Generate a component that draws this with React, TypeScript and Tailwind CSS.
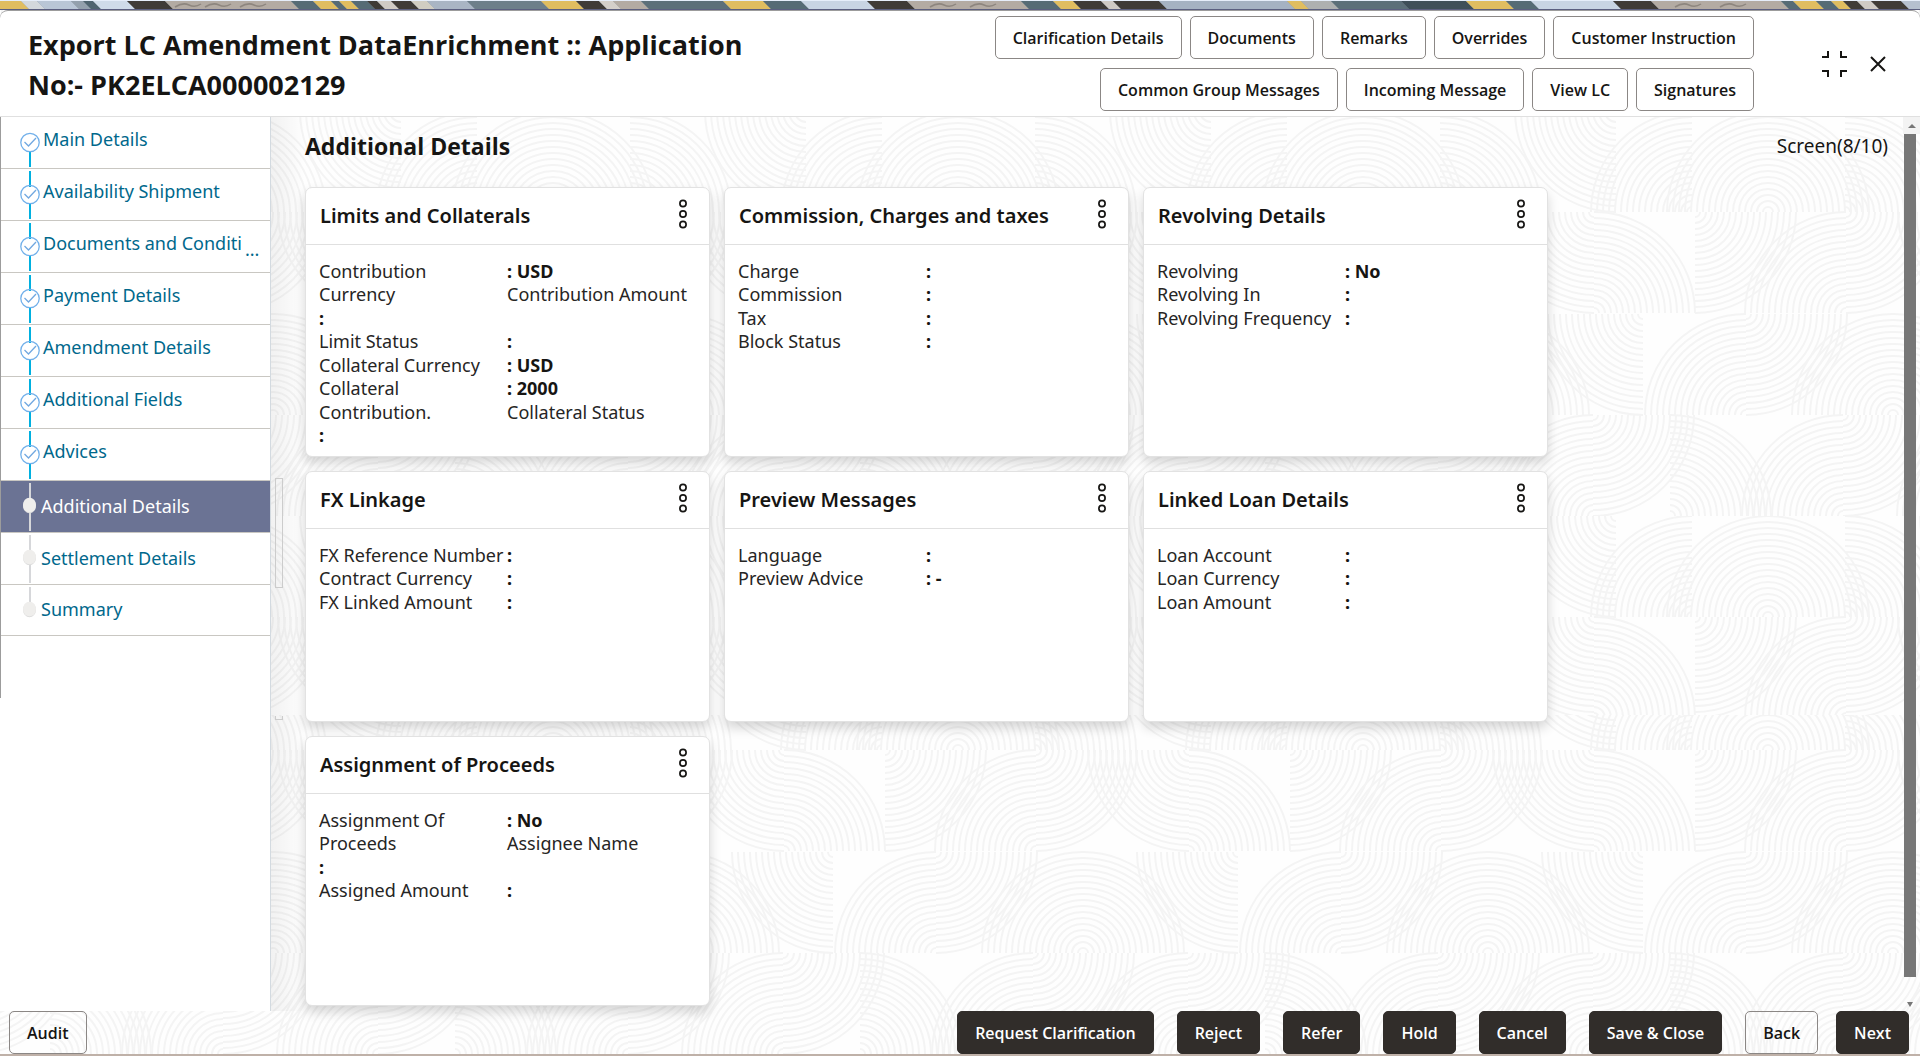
import React from 'react';

type Line = [string, string, boolean?];

const headerActions = [
  'Clarification Details',
  'Documents',
  'Remarks',
  'Overrides',
  'Customer Instruction',
  'Common Group Messages',
  'Incoming Message',
  'View LC',
  'Signatures',
];

const steps: { label: string; state: 'done' | 'active' | 'pending'; cut?: boolean }[] = [
  { label: 'Main Details', state: 'done' },
  { label: 'Availability Shipment', state: 'done' },
  { label: 'Documents and Conditi', state: 'done', cut: true },
  { label: 'Payment Details', state: 'done' },
  { label: 'Amendment Details', state: 'done' },
  { label: 'Additional Fields', state: 'done' },
  { label: 'Advices', state: 'done' },
  { label: 'Additional Details', state: 'active' },
  { label: 'Settlement Details', state: 'pending' },
  { label: 'Summary', state: 'pending' },
];

// Each line: left text, right text, and whether the right text is a label too.
const cards: { title: string; short?: boolean; lines: Line[] }[] = [
  {
    title: 'Limits and Collaterals',
    lines: [
      ['Contribution', ': USD'],
      ['Currency', 'Contribution Amount', true],
      [':', ''],
      ['Limit Status', ':'],
      ['Collateral Currency', ': USD'],
      ['Collateral', ': 2000'],
      ['Contribution.', 'Collateral Status', true],
      [':', ''],
    ],
  },
  {
    title: 'Commission, Charges and taxes',
    lines: [
      ['Charge', ':'],
      ['Commission', ':'],
      ['Tax', ':'],
      ['Block Status', ':'],
    ],
  },
  {
    title: 'Revolving Details',
    lines: [
      ['Revolving', ': No'],
      ['Revolving In', ':'],
      ['Revolving Frequency', ':'],
    ],
  },
  {
    title: 'FX Linkage',
    short: true,
    lines: [
      ['FX Reference Number', ':'],
      ['Contract Currency', ':'],
      ['FX Linked Amount', ':'],
    ],
  },
  {
    title: 'Preview Messages',
    short: true,
    lines: [
      ['Language', ':'],
      ['Preview Advice', ': -'],
    ],
  },
  {
    title: 'Linked Loan Details',
    short: true,
    lines: [
      ['Loan Account', ':'],
      ['Loan Currency', ':'],
      ['Loan Amount', ':'],
    ],
  },
  {
    title: 'Assignment of Proceeds',
    lines: [
      ['Assignment Of', ': No'],
      ['Proceeds', 'Assignee Name', true],
      [':', ''],
      ['Assigned Amount', ':'],
    ],
  },
];

// Slanted banner bands: start, end, colour.
const bands: [number, number, string][] = [
  [-10, 20, '#e0bd60'], [20, 36, '#d3d8dc'], [36, 70, '#b9c6d6'], [70, 82, '#93a0ad'], [82, 92, '#4f6470'],
  [92, 126, '#cfdbe9'], [126, 164, '#3f3b37'], [164, 290, '#b3aba3'], [290, 312, '#566b75'], [312, 330, '#e0bd60'],
  [330, 338, '#566b75'], [338, 350, '#e0bd60'], [350, 366, '#566b75'], [366, 376, '#3f3b37'], [376, 390, '#cfcac5'],
  [390, 410, '#3f3b37'], [410, 426, '#d0cdc2'], [426, 466, '#a9b5c4'], [466, 540, '#6d7f8a'], [540, 575, '#e0bd60'],
  [575, 598, '#3f3b37'], [598, 612, '#d3cfca'], [612, 640, '#b3aba3'], [640, 722, '#5c6f79'], [722, 762, '#e0bd60'],
  [762, 800, '#566b75'], [800, 866, '#c8d4e3'], [866, 906, '#3f3b37'], [906, 1020, '#b3aba3'], [1020, 1052, '#566b75'],
  [1052, 1072, '#e0bd60'], [1072, 1100, '#3f3b37'], [1100, 1112, '#cfcac5'], [1112, 1158, '#3f3b37'],
  [1158, 1286, '#a5b2c2'], [1286, 1300, '#e0bd60'], [1300, 1330, '#aeb0b0'], [1330, 1400, '#5c6f79'],
  [1400, 1465, '#3f4f59'], [1465, 1505, '#e0bd60'], [1505, 1530, '#566b75'], [1530, 1612, '#c8d4e3'],
  [1612, 1650, '#3f3b37'], [1650, 1780, '#b3aba3'], [1780, 1792, '#566b75'], [1792, 1815, '#e0bd60'],
  [1815, 1830, '#566b75'], [1830, 1842, '#e0bd60'], [1842, 1856, '#3f3b37'], [1856, 1870, '#cfcac5'],
  [1870, 1900, '#3f3b37'], [1900, 1940, '#b5c0cf'],
];

function Banner() {
  return (
    <div className="h-2.5 shrink-0 overflow-hidden bg-[#5b5f80]">
      <svg className="block h-[9px] w-full" viewBox="0 0 1920 9" preserveAspectRatio="none" aria-hidden="true">
        <rect width="1920" height="9" fill="#8d99a5" />
        {bands.map(([a, b, c], i) => (
          <polygon key={i} points={`${a},0 ${b},0 ${b + 9},9 ${a + 9},9`} fill={c} />
        ))}
        <path
          d="M175 7q8-5 14-2t12-1M205 7q8-5 14-2t12-1M240 7q8-5 14-2t12-1M930 7q8-5 14-2t12-1M970 7q8-5 14-2t12-1M1675 7q8-5 14-2t12-1M1720 7q8-5 14-2t12-1"
          fill="none"
          stroke="#8d867f"
          strokeWidth="1.5"
        />
        <rect width="1920" height="1" fill="#e6eefa" />
      </svg>
    </div>
  );
}

// Quarter fans of the backdrop tile: centre x, centre y, horizontal and vertical direction.
const fans: [number, number, number, number][] = [
  [401, 0, -1, 1], [72, 101, -1, -1], [148, 101, -1, -1], [148, 101, 1, -1], [225, 101, 1, -1],
  [379, 101, -1, 1], [379, 202, 1, -1], [75, 101, 1, 1], [226, 202, -1, -1], [226, 101, 1, 1],
  [23, 203, -1, 1], [126, 304, -1, -1], [126, 203, 1, 1], [273, 304, -1, -1], [273, 304, 1, -1],
  [378, 405, -1, -1], [378, 304, 1, 1], [50, 405, 1, -1], [223, 405, -1, -1], [223, 304, 1, 1],
];

const rings = Array.from({ length: 17 }, (_, i) => 5 + i * 6);

function fanPath(cx: number, cy: number, dx: number, dy: number) {
  const sweep = dx * dy > 0 ? 1 : 0;
  return rings.map((r) => `M${cx + dx * r} ${cy}A${r} ${r} 0 0 ${sweep} ${cx} ${cy + dy * r}`).join('');
}

function Backdrop() {
  return (
    <svg className="pointer-events-none absolute inset-0 h-full w-full" aria-hidden="true">
      <defs>
        <g id="fans" fill="none" stroke="#f4f4f4" strokeWidth="2">
          {[-405, 0, 405].map((shift) =>
            fans.map(([x, y, dx, dy], i) => <path key={`${shift}-${i}`} d={fanPath(x + shift, y, dx, dy)} />)
          )}
        </g>
        <pattern id="upper" width="405" height="405" patternUnits="userSpaceOnUse" x="0" y="111">
          <use href="#fans" />
        </pattern>
        <pattern id="lower" width="405" height="405" patternUnits="userSpaceOnUse" x="0" y="649">
          <use href="#fans" />
        </pattern>
      </defs>
      <rect width="100%" height="715" fill="url(#upper)" />
      <rect y="715" width="100%" height="100%" fill="url(#lower)" />
    </svg>
  );
}

function StepMark({ state, first, last }: { state: string; first: boolean; last: boolean }) {
  if (state === 'done') {
    return (
      <svg className="h-[51px] w-5 shrink-0" viewBox="0 0 20 51" fill="none" aria-hidden="true">
        {!first && <rect x="9" y="2" width="2" height="16" fill="#00b0e0" />}
        <rect x="9" y="35" width="2" height="15" fill="#00b0e0" />
        <circle cx="10" cy="25.5" r="9.2" stroke="#72b0ea" strokeWidth="1.3" />
        <path d="M4.5 25l4 4 7.5-8" stroke="#72a8e0" strokeWidth="1.3" />
      </svg>
    );
  }
  return (
    <svg className={`w-5 shrink-0 ${last ? 'h-[50px]' : 'h-[51px]'}`} viewBox={last ? '0 0 20 50' : '0 0 20 51'} aria-hidden="true">
      <rect x="9" y="2" width="2" height={last ? 20 : 48} fill="#d6d7da" />
      <ellipse cx="9.5" cy="24.8" rx="6.5" ry="7.5" fill="#dddddd" />
      <ellipse cx="9.5" cy="24" rx="6.5" ry="7.3" fill="#efeeec" />
    </svg>
  );
}

function Sidebar() {
  return (
    <nav aria-label="Steps" className="w-[271px] shrink-0 border-r border-[#d3dae0] bg-white font-['Noto_Sans',sans-serif] text-[18px] leading-6">
      <ul className="min-h-[581px] border-l border-[#9c9c9c]">
        {steps.map((s, i) => (
          <li key={s.label} className={`border-b border-[#c9c7c2] ${s.state === 'active' ? 'bg-[#6b7394] text-white' : 'text-[#00688c]'}`}>
            <a href="#" className={`flex pl-[19px] ${s.state === 'done' ? 'items-start gap-[3px]' : 'items-center gap-px'}`}>
              <StepMark state={s.state} first={i === 0} last={i === steps.length - 1} />
              <span className={`whitespace-nowrap ${s.state === 'done' ? 'pt-2.5' : 'pb-0.5'}`}>{s.label}</span>
              {s.cut && <span className="pt-4">...</span>}
            </a>
          </li>
        ))}
      </ul>
    </nav>
  );
}

function Card({ title, short, lines }: { title: string; short?: boolean; lines: Line[] }) {
  return (
    <section
      className={`w-[405px] rounded-[7px] border border-[#e2e2e2] bg-white shadow-[0_6px_12px_rgba(0,0,0,0.16)] ${short ? 'min-h-[251px]' : 'min-h-[270px]'}`}
    >
      <header className="flex h-[57px] items-center justify-between border-b border-[#e0e0e0] pr-5 pl-[14px]">
        <h2 className="font-['Noto_Sans',sans-serif] text-[20px] leading-7 font-semibold">{title}</h2>
        <button type="button" aria-label={`${title} menu`} className="pb-1">
          <svg className="block h-[30px] w-3" viewBox="0 0 12 30" fill="none" stroke="#161513" strokeWidth="1.7" aria-hidden="true">
            <circle cx="6" cy="4.5" r="3.1" />
            <circle cx="6" cy="15" r="3.1" />
            <circle cx="6" cy="25.5" r="3.1" />
          </svg>
        </button>
      </header>
      <dl className="grid grid-cols-[188px_1fr] pt-[14px] pl-[13px] font-['Noto_Sans',sans-serif] text-[18px] whitespace-nowrap">
        {lines.map(([left, right, plain], i) => {
          const leading = i % 2 ? 'leading-[23px]' : 'leading-6';
          return (
            <React.Fragment key={i}>
              <dt className={`${leading} ${left === ':' ? 'font-bold' : 'text-[#262524]'}`}>{left}</dt>
              <dd className={`${leading} ${plain ? 'text-[#262524]' : 'font-bold'}`}>{right}</dd>
            </React.Fragment>
          );
        })}
      </dl>
    </section>
  );
}

function FooterButton({ label, outline }: { label: string; outline?: boolean }) {
  return (
    <button
      type="button"
      className={`h-[43px] rounded-[5px] border px-[17px] text-[16px] leading-6 font-semibold whitespace-nowrap ${
        outline ? 'border-[#8b8785] text-[#161513]' : 'border-[#312d2a] bg-[#312d2a] text-white'
      }`}
    >
      {label}
    </button>
  );
}

export default function App() {
  return (
    <div className="relative flex min-h-screen flex-col bg-[#fefefe] font-['Open_Sans',sans-serif] text-[#161513]">
      <Backdrop />
      <div className="relative flex flex-1 flex-col">
        <Banner />
        <header className="flex items-start rounded-t-lg border-t border-b border-t-[#9c9c9c] border-b-[#e0e0e0] bg-white pr-[34px] pl-7">
          <h1 className="w-[740px] shrink-0 pt-[14px] text-[27px] leading-10 font-bold">
            Export LC Amendment DataEnrichment :: Application No:- PK2ELCA000002129
          </h1>
          <div className="ml-5 flex flex-1 flex-wrap justify-end gap-x-2 gap-y-[9px] py-[5px]">
            {headerActions.map((a) => (
              <button
                key={a}
                type="button"
                className="h-[43px] rounded-[5px] border border-[#8b8785] bg-white px-[17px] text-[16px] leading-6 font-semibold whitespace-nowrap"
              >
                {a}
              </button>
            ))}
          </div>
          <div className="ml-[67px] flex items-center gap-[22px] self-center">
            <button type="button" aria-label="Exit full screen">
              <svg className="block h-7 w-[27px]" viewBox="0 0 27 28" fill="none" stroke="#161513" strokeWidth="2" aria-hidden="true">
                <path d="M1 7H7V1M20 1V7H26M1 21H7V27M20 27V21H26" />
              </svg>
            </button>
            <button type="button" aria-label="Close">
              <svg className="block h-4 w-4" viewBox="0 0 16 16" fill="none" stroke="#161513" strokeWidth="2" aria-hidden="true">
                <path d="M1 1l14 14M15 1L1 15" />
              </svg>
            </button>
          </div>
        </header>

        <div className="flex flex-1">
          <Sidebar />
          <main className="flex flex-1">
            <div className="flex w-[34px] shrink-0 flex-col bg-linear-to-r from-black/5 to-black/0 pt-[361px] pl-1">
              <div className="h-[110px] w-2 border border-[#cccccc]" />
              <div className="mt-32 h-1 w-2 border border-t-0 border-[#cccccc]" />
            </div>
            <div className="flex-1 pt-[13px] pb-1">
              <div className="mb-[25px] flex items-center justify-between pr-[15px] leading-8">
                <h2 className="text-[23px] font-bold">Additional Details</h2>
                <span className="font-['Noto_Sans',sans-serif] text-[19px]">Screen(8/10)</span>
              </div>
              <div className="flex flex-wrap gap-[14px]">
                {cards.map((c) => (
                  <Card key={c.title} {...c} />
                ))}
              </div>
            </div>
          </main>
          <div className="flex w-[17px] shrink-0 flex-col items-start pb-1">
            <div className="flex h-[17px] w-full items-center justify-center bg-[#f3f3f3]">
              <svg className="h-1 w-2" viewBox="0 0 8 4" aria-hidden="true">
                <path d="M0 4L4 0L8 4Z" fill="#777777" />
              </svg>
            </div>
            <div className="mb-6 ml-px w-3 flex-1 bg-[#777777]" />
            <svg className="ml-[3px] h-1.5 w-2" viewBox="0 0 8 6" aria-hidden="true">
              <path d="M1 1L7 1L4 6Z" fill="#777777" />
            </svg>
          </div>
        </div>

        <footer className="flex items-center justify-between pr-[11px] pl-[9px]">
          <FooterButton label="Audit" outline />
          <div className="flex gap-[18px]">
            <div className="flex gap-[23px]">
              <FooterButton label="Request Clarification" />
              <FooterButton label="Reject" />
              <FooterButton label="Refer" />
              <FooterButton label="Hold" />
              <FooterButton label="Cancel" />
              <FooterButton label="Save & Close" />
              <FooterButton label="Back" outline />
            </div>
            <FooterButton label="Next" />
          </div>
        </footer>
        <div className="h-0.5 bg-[#bfb1a8]" />
      </div>
    </div>
  );
}
